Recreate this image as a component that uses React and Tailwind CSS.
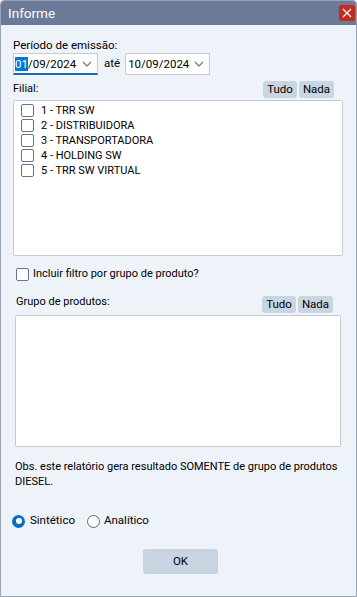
import React from "react";

const Chevron = () => (
  <svg width="10" height="6" viewBox="0 0 10 6" className="shrink-0">
    <path d="M1 1 L5 5 L9 1" fill="none" stroke="#6b7280" strokeWidth="1.1" />
  </svg>
);

const Box = () => (
  <span className="w-[13px] h-[13px] rounded-[2px] border border-[#66738c] bg-white shrink-0" />
);

const SmallBtn = ({ children, w }) => (
  <span className={`h-[17px] ${w} rounded-[3px] bg-[#c9d5e2] flex items-center justify-center text-[11.5px] text-black`}>
    {children}
  </span>
);

export default function App() {
  const filiais = [
    "1 - TRR SW",
    "2 - DISTRIBUIDORA",
    "3 - TRANSPORTADORA",
    "4 - HOLDING SW",
    "5 - TRR SW VIRTUAL",
  ];
  return (
    <div
      className="w-[357px] h-[597px] flex flex-col overflow-hidden rounded-t-[4px] border border-[#9aa3b3] text-[11px] text-black"
      style={{ fontFamily: "Roboto, 'Liberation Sans', sans-serif" }}
    >
      <div className="h-[24px] shrink-0 bg-[#6b7a99] flex items-center justify-between pl-[7px] pr-[1px]">
        <span className="text-[13.5px] text-white">Informe</span>
        <span className="w-[16px] h-[16px] rounded-[2px] bg-[#c42b1c] flex items-center justify-center">
          <svg width="10" height="10" viewBox="0 0 10 10">
            <path d="M1 1 L9 9 M9 1 L1 9" stroke="white" strokeWidth="1.2" />
          </svg>
        </span>
      </div>
      <div className="flex-1 bg-[#eef3fa] flex flex-col">
        <div className="mt-[12px] ml-[12px] leading-[16px] text-[11.5px]">Período de emissão:</div>
        <div className="ml-[12px] flex items-center h-[22px]">
          <div className="w-[85px] h-[22px] bg-white border border-[#c5cbd6] border-b-2 border-b-[#0f6cbd] flex items-center pl-[1px] pr-[5px] justify-between">
            <span className="text-[11.5px] leading-[14px]">
              <span className="bg-[#0078d7] text-white">01</span>/09/2024
            </span>
            <Chevron />
          </div>
          <span className="text-[11.5px] ml-[6px] mr-[5px]">até</span>
          <div className="w-[85px] h-[22px] bg-white border border-[#c5cbd6] flex items-center pl-[2px] pr-[5px] justify-between">
            <span className="text-[11.5px] leading-[14px]">10/09/2024</span>
            <Chevron />
          </div>
        </div>
        <div className="mt-[6px] ml-[12px] mr-[22px] flex items-end justify-between h-[19px]">
          <span className="leading-[16px] self-start">Filial:</span>
          <div className="flex gap-[2px] mb-[2px]">
            <SmallBtn w="w-[34px]">Tudo</SmallBtn>
            <SmallBtn w="w-[35px]">Nada</SmallBtn>
          </div>
        </div>
        <div className="ml-[12px] w-[330px] h-[156px] bg-white border border-[#c5cbd6] rounded-[2px] pt-[2px] pl-[7px] flex flex-col">
          {filiais.map((f) => (
            <div key={f} className="h-[15px] flex items-center gap-[7px]">
              <Box />
              <span className="leading-[15px]">{f}</span>
            </div>
          ))}
        </div>
        <div className="mt-[11px] ml-[15px] flex items-center gap-[4px] h-[14px]">
          <Box />
          <span className="leading-[14px]">Incluir filtro por grupo de produto?</span>
        </div>
        <div className="mt-[13px] ml-[15px] mr-[23px] flex justify-between h-[21px]">
          <span className="leading-[16px]">Grupo de produtos:</span>
          <div className="flex gap-[2px] self-end mb-[2px]">
            <SmallBtn w="w-[34px]">Tudo</SmallBtn>
            <SmallBtn w="w-[35px]">Nada</SmallBtn>
          </div>
        </div>
        <div className="ml-[14px] w-[326px] h-[132px] bg-white border border-[#c5cbd6] rounded-[2px]" />
        <div className="mt-[12px] ml-[14px] mr-[8px] leading-[15px] text-[11px]">
          Obs. este relatório gera resultado SOMENTE de grupo de produtos DIESEL.
        </div>
        <div className="mt-[25px] ml-[11px] flex items-center h-[14px] text-[11.5px]">
          <span className="w-[13px] h-[13px] rounded-full bg-[#0f6cbd] flex items-center justify-center">
            <span className="w-[6px] h-[6px] rounded-full bg-white" />
          </span>
          <span className="ml-[5px]">Sintético</span>
          <span className="ml-[12px] w-[13px] h-[13px] rounded-full border border-[#5d6a82] bg-white" />
          <span className="ml-[4px]">Analítico</span>
        </div>
        <div className="mt-[21px] flex justify-center">
          <span className="ml-[4px] w-[75px] h-[25px] rounded-[3px] bg-[#c8d4e1] flex items-center justify-center text-[11.5px]">
            OK
          </span>
        </div>
      </div>
    </div>
  );
}
